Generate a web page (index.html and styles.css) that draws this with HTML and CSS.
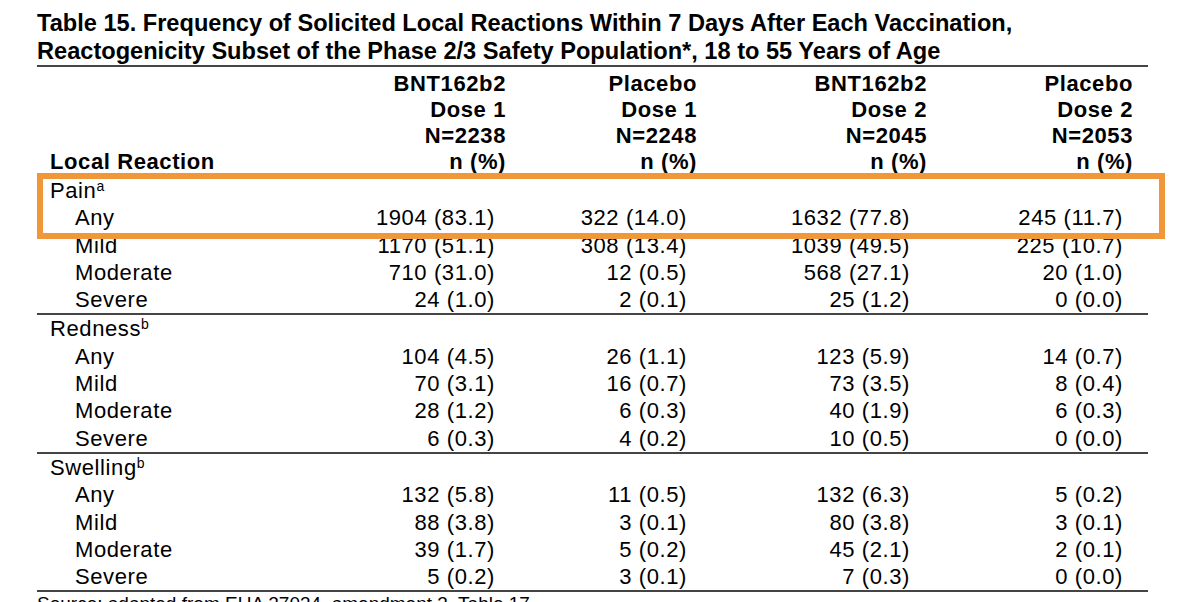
FILE: index.html
```html
<!DOCTYPE html>
<html lang="en">
<head>
<meta charset="utf-8">
<title>Table 15</title>
<link rel="stylesheet" href="styles.css">
</head>
<body>
<div class="page">
  <h1 class="title">Table 15. Frequency of Solicited Local Reactions Within 7 Days After Each Vaccination,<br>Reactogenicity Subset of the Phase 2/3 Safety Population*, 18 to 55 Years of Age</h1>
  <table class="freq">
    <colgroup>
      <col class="c-label"><col class="c1"><col class="c2"><col class="c3"><col class="c4">
    </colgroup>
    <thead>
      <tr class="first"><th class="label"></th><th class="n1">BNT162b2</th><th class="n2">Placebo</th><th class="n3">BNT162b2</th><th class="n4">Placebo</th></tr>
      <tr><th class="label"></th><th class="n1">Dose 1</th><th class="n2">Dose 1</th><th class="n3">Dose 2</th><th class="n4">Dose 2</th></tr>
      <tr><th class="label"></th><th class="n1">N=2238</th><th class="n2">N=2248</th><th class="n3">N=2045</th><th class="n4">N=2053</th></tr>
      <tr><th class="label">Local Reaction</th><th class="n1">n (%)</th><th class="n2">n (%)</th><th class="n3">n (%)</th><th class="n4">n (%)</th></tr>
    </thead>
    <tbody class="section">
      <tr><td class="cat">Pain<sup>a</sup></td><td></td><td></td><td></td><td></td></tr>
      <tr><td class="sub">Any</td><td class="v1">1904 (83.1)</td><td class="v2">322 (14.0)</td><td class="v3">1632 (77.8)</td><td class="v4">245 (11.7)</td></tr>
      <tr><td class="sub">Mild</td><td class="v1">1170 (51.1)</td><td class="v2">308 (13.4)</td><td class="v3">1039 (49.5)</td><td class="v4">225 (10.7)</td></tr>
      <tr><td class="sub">Moderate</td><td class="v1">710 (31.0)</td><td class="v2">12 (0.5)</td><td class="v3">568 (27.1)</td><td class="v4">20 (1.0)</td></tr>
      <tr><td class="sub">Severe</td><td class="v1">24 (1.0)</td><td class="v2">2 (0.1)</td><td class="v3">25 (1.2)</td><td class="v4">0 (0.0)</td></tr>
    </tbody>
    <tbody class="section">
      <tr><td class="cat">Redness<sup>b</sup></td><td></td><td></td><td></td><td></td></tr>
      <tr><td class="sub">Any</td><td class="v1">104 (4.5)</td><td class="v2">26 (1.1)</td><td class="v3">123 (5.9)</td><td class="v4">14 (0.7)</td></tr>
      <tr><td class="sub">Mild</td><td class="v1">70 (3.1)</td><td class="v2">16 (0.7)</td><td class="v3">73 (3.5)</td><td class="v4">8 (0.4)</td></tr>
      <tr><td class="sub">Moderate</td><td class="v1">28 (1.2)</td><td class="v2">6 (0.3)</td><td class="v3">40 (1.9)</td><td class="v4">6 (0.3)</td></tr>
      <tr><td class="sub">Severe</td><td class="v1">6 (0.3)</td><td class="v2">4 (0.2)</td><td class="v3">10 (0.5)</td><td class="v4">0 (0.0)</td></tr>
    </tbody>
    <tbody class="section">
      <tr><td class="cat">Swelling<sup>b</sup></td><td></td><td></td><td></td><td></td></tr>
      <tr><td class="sub">Any</td><td class="v1">132 (5.8)</td><td class="v2">11 (0.5)</td><td class="v3">132 (6.3)</td><td class="v4">5 (0.2)</td></tr>
      <tr><td class="sub">Mild</td><td class="v1">88 (3.8)</td><td class="v2">3 (0.1)</td><td class="v3">80 (3.8)</td><td class="v4">3 (0.1)</td></tr>
      <tr><td class="sub">Moderate</td><td class="v1">39 (1.7)</td><td class="v2">5 (0.2)</td><td class="v3">45 (2.1)</td><td class="v4">2 (0.1)</td></tr>
      <tr><td class="sub">Severe</td><td class="v1">5 (0.2)</td><td class="v2">3 (0.1)</td><td class="v3">7 (0.3)</td><td class="v4">0 (0.0)</td></tr>
    </tbody>
  </table>
  <p class="source">Source: adapted from EUA 27034, amendment 3, Table 17.</p>
  <div class="highlight"></div>
</div>
</body>
</html>
```

FILE: styles.css
```css
html, body {
  margin: 0;
  padding: 0;
  background: #ffffff;
}

body {
  font-family: "Liberation Sans", Arial, Helvetica, sans-serif;
  color: #000;
}

.page {
  position: relative;
  box-sizing: border-box;
  width: 1200px;
  height: 602px;
  padding-left: 37px;
  overflow: hidden;
}

.title {
  margin: 9px 0 0 0;
  font-size: 23.6px;
  line-height: 28px;
  font-weight: bold;
  white-space: nowrap;
}

.freq {
  width: 1111px;
  table-layout: fixed;
  border-collapse: collapse;
  border-top: 2px solid #444;
  font-size: 22px;
  letter-spacing: 0.6px;
}

.c-label { width: 242px; }
.c1 { width: 231px; }
.c2 { width: 201px; }
.c3 { width: 230px; }
.c4 { width: 207px; }

.freq th {
  font-weight: bold;
  height: 26px;
  line-height: 26px;
  padding: 0;
  text-align: right;
  white-space: nowrap;
}

.freq thead tr.first th {
  padding-top: 4px;
}

.freq thead {
  border-bottom: 2px solid #444;
}

.freq th.label {
  text-align: left;
  padding-left: 13px;
}

.freq th.n1 { padding-right: 4px; }
.freq th.n2 { padding-right: 14px; }
.freq th.n3 { padding-right: 14px; }
.freq th.n4 { padding-right: 15px; }

.freq td {
  height: 27.3px;
  line-height: 27.3px;
  padding: 0;
  white-space: nowrap;
  text-align: right;
}

.section {
  border-bottom: 2px solid #444;
}

.freq td.cat {
  text-align: left;
  padding-left: 13px;
}

.freq td.sub {
  text-align: left;
  padding-left: 38px;
}

.freq td.v1 { padding-right: 15px; }
.freq td.v2 { padding-right: 24px; }
.freq td.v3 { padding-right: 31px; }
.freq td.v4 { padding-right: 25px; }

.freq sup {
  font-size: 14px;
  line-height: 0;
  vertical-align: 7px;
  letter-spacing: 0;
}

.source {
  margin: 0;
  font-size: 19px;
  line-height: 24px;
  white-space: nowrap;
}

.highlight {
  position: absolute;
  left: 37px;
  top: 173px;
  width: 1128px;
  height: 66px;
  box-sizing: border-box;
  border: 6px solid #f0973a;
}
```
